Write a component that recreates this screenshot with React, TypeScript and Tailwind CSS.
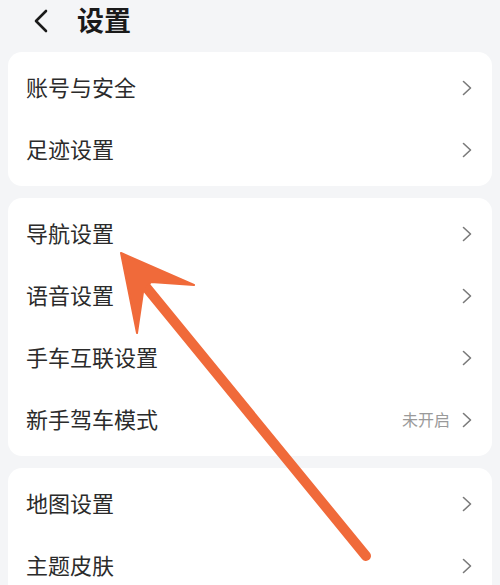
import React from "react";

const Chevron = () => (
  <svg width="10" height="16" viewBox="0 0 10 16" fill="none" className="shrink-0">
    <polyline points="1.5,1.5 8.5,8 1.5,14.5" stroke="#7a7a7a" strokeWidth="1.6" strokeLinecap="round" strokeLinejoin="round" />
  </svg>
);

const Row = ({ label, value }: { label: string; value?: string }) => (
  <div className="h-[62px] flex items-center justify-between pl-[18px] pr-[20px]">
    <span className="text-[22px] text-[#2b2b2b] leading-none pb-[4px]">{label}</span>
    <div className="flex items-center gap-[12px]">
      {value && <span className="text-[16px] text-[#9a9a9a] leading-none pb-[2px]">{value}</span>}
      <Chevron />
    </div>
  </div>
);

const Card = ({ children }: { children: React.ReactNode }) => (
  <div className="bg-white rounded-[14px] py-[5px] mx-[8px]">{children}</div>
);

export default function App() {
  return (
    <div
      className="w-[500px] h-[585px] bg-[#f4f5f7] overflow-hidden relative"
      style={{ fontFamily: '"Noto Sans CJK SC", "Noto Sans", sans-serif' }}
    >
      <div className="h-[44px] flex items-center pl-[32px] pb-[2px]">
        <svg width="18" height="24" viewBox="0 0 18 24" fill="none">
          <polyline points="14,2 4,12 14,22" stroke="#1a1a1a" strokeWidth="2.6" strokeLinecap="round" strokeLinejoin="round" />
        </svg>
        <span className="ml-[27px] text-[27px] font-bold text-[#1a1a1a] leading-none pb-[3px]">设置</span>
      </div>
      <div className="flex flex-col gap-[12px] mt-[8px]">
        <Card>
          <Row label="账号与安全" />
          <Row label="足迹设置" />
        </Card>
        <Card>
          <Row label="导航设置" />
          <Row label="语音设置" />
          <Row label="手车互联设置" />
          <Row label="新手驾车模式" value="未开启" />
        </Card>
        <Card>
          <Row label="地图设置" />
          <Row label="主题皮肤" />
        </Card>
      </div>
      <svg className="absolute left-0 top-0 pointer-events-none" width="500" height="585" viewBox="0 0 500 585">
        <line x1="146" y1="287" x2="366" y2="556" stroke="#f06a3a" strokeWidth="10" strokeLinecap="round" />
        <polygon points="121,253 194,285 151,282 143,292 137,333" fill="#f06a3a" stroke="#f06a3a" strokeWidth="2" strokeLinejoin="round" />
      </svg>
    </div>
  );
}
